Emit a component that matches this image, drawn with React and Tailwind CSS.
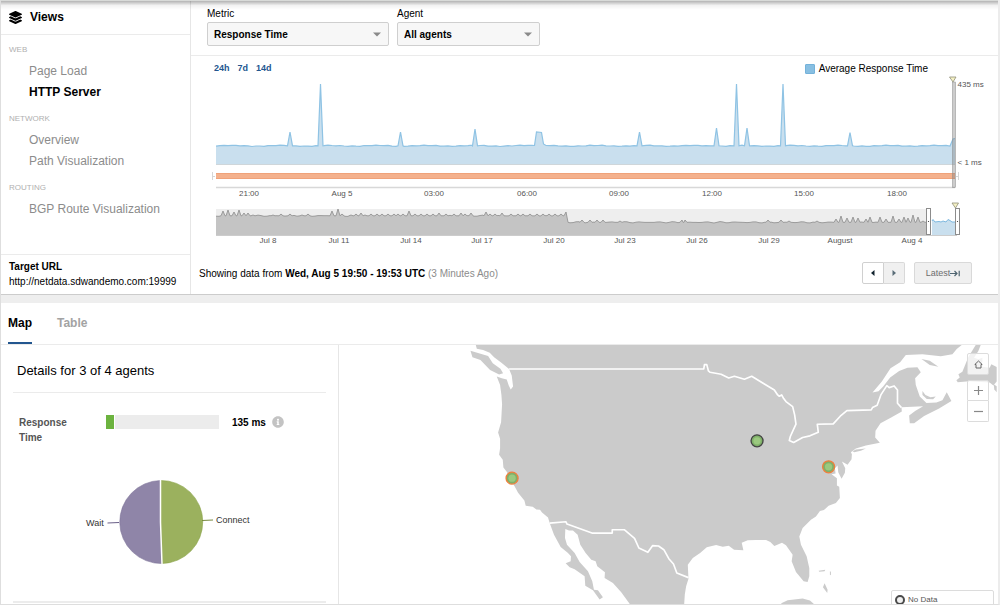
import React from 'react';
import { FaLayerGroup, FaInfoCircle } from 'react-icons/fa';

const NAV = [
  { title: 'WEB', items: ['Page Load', 'HTTP Server'] },
  { title: 'NETWORK', items: ['Overview', 'Path Visualization'] },
  { title: 'ROUTING', items: ['BGP Route Visualization'] },
];

const HOURS = [
  [249, '21:00'], [342, 'Aug 5'], [434, '03:00'], [527, '06:00'],
  [619, '09:00'], [712, '12:00'], [804, '15:00'], [897, '18:00'],
];

const DAYS = [
  [268, 'Jul 8'], [339, 'Jul 11'], [411, 'Jul 14'], [482, 'Jul 17'], [554, 'Jul 20'],
  [625, 'Jul 23'], [697, 'Jul 26'], [769, 'Jul 29'], [840, 'August'], [912, 'Aug 4'],
];

// [x, peak y] of each spike in the response time series
const SPIKES = [
  [290, 132], [320.5, 84], [400.5, 132], [475, 129], [639.5, 132],
  [716.5, 128], [736.5, 84], [747, 128], [783, 84], [850, 132.5],
];

// [x, peak y] of the bumps in the 30 day overview
const BUMPS = [
  [223, 211], [228, 210], [234, 212], [239, 210], [244, 213], [248, 213], [253, 215],
  [273, 215], [281, 214], [290, 214], [302, 215], [308, 214], [332, 211], [338, 209], [342, 214],
  [351, 215], [356, 214], [361, 213], [365, 215], [371, 214], [377, 214], [382, 214], [388, 214],
  [394, 214], [398, 214], [403, 214], [409, 211], [415, 214], [421, 214], [427, 214], [433, 214],
  [439, 213], [446, 214], [454, 214], [461, 213], [465, 214], [471, 213], [486, 212], [490, 214],
  [495, 214], [502, 213], [511, 214], [518, 214], [523, 214], [530, 214], [537, 214], [543, 214],
  [549, 214], [555, 214], [561, 214], [566, 212],
  [582, 220], [590, 220], [597, 220], [603, 220], [620, 221], [682, 220], [685, 220], [768, 220],
  [781, 220], [789, 221], [817, 221], [836, 219], [841, 216], [847, 218], [853, 217], [858, 218],
  [866, 219], [870, 217], [880, 217], [886, 219], [893, 216], [899, 219], [904, 217], [908, 218],
  [913, 215], [918, 217], [923, 221],
];

function wobble(x) {
  return Math.sin(x * 1.7) * 0.4 + Math.sin(x * 0.53) * 0.3;
}

function trace(from, to, step, base, peaks, spread) {
  const points = [];
  for (let x = from; x <= to; x += step) {
    if (!peaks.some(([px]) => Math.abs(px - x) < spread + 0.5)) points.push([x, base(x) + wobble(x)]);
  }
  peaks.forEach(([px, py]) => {
    points.push([px - spread, base(px - spread)], [px, py], [px + spread, base(px + spread)]);
  });
  return points.sort((a, b) => a[0] - b[0]).map((p) => `${p[0].toFixed(1)},${p[1].toFixed(1)}`).join(' ');
}

const leftLine = trace(216, 532, 4, () => 145.8, SPIKES.filter(([x]) => x < 534), 2.5);
const rightLine = trace(546, 950, 4, () => 145.8, SPIKES.filter(([x]) => x > 534), 2.5);
const responseLine = `${leftLine} 534.5,145.5 536.5,132 541.5,132.5 543.5,144 ${rightLine} 953,139 955,138.5`;
const overviewLine = trace(216, 926, 3, (x) => (x < 568 ? 215.8 : 222.3), BUMPS, 2);
const selectedLine = '932,221 933,219.5 935,222 939,221.5 941,222 943,221 946,222 948,219.5 950,220.5 952,222 956,222';

function Sidebar() {
  return (
    <aside className="flex w-[190px] shrink-0 flex-col border-r border-[#e6e6e6]">
      <div className="flex h-[35px] items-center gap-2 border-b border-[#ebebeb] pl-2">
        <FaLayerGroup size={13} />
        <h2 className="text-[12px] font-bold">Views</h2>
      </div>
      <nav className="flex-1">
        {NAV.map((group) => (
          <section key={group.title} className="pb-px">
            <h3 className="pt-2 pb-1 pl-2 text-[8px] leading-[14px] text-[#b0b0b0]">{group.title}</h3>
            {group.items.map((item) => (
              <a
                key={item}
                href="#"
                className={
                  item === 'HTTP Server'
                    ? 'block pl-7 text-[12px] leading-[21px] font-bold text-black'
                    : 'block pl-7 text-[12px] leading-[21px] text-[#8c8c8c]'
                }
              >
                {item}
              </a>
            ))}
          </section>
        ))}
      </nav>
      <div className="border-t border-[#ebebeb] pt-1 pb-[5px] pl-2 text-[10px] leading-[15px]">
        <h3 className="font-bold">Target URL</h3>
        <p>http://netdata.sdwandemo.com:19999</p>
      </div>
    </aside>
  );
}

function Picker({ id, label, value, width }) {
  return (
    <div className={width}>
      <label htmlFor={id} className="block text-[10px] leading-[16px]">{label}</label>
      <div className="relative">
        <select
          id={id}
          className="block h-6 w-full appearance-none rounded-[2px] border border-[#cfcfcf] bg-[#f7f7f7] pl-[6px] text-[10px] font-bold"
        >
          <option>{value}</option>
        </select>
        <svg className="pointer-events-none absolute top-[10px] right-2 h-[5px] w-2" viewBox="0 0 8 5">
          <path d="M0 0.5h8L4 4.5z" fill="#8a8a8a" />
        </svg>
      </div>
    </div>
  );
}

function TimelineChart() {
  return (
    <svg viewBox="207 76 787 172" className="block w-full" fontSize="8" fill="#555">
      <polygon points={`216,164 ${responseLine} 955,164`} fill="#c9dfee" />
      <polyline points={responseLine} fill="none" stroke="#8fc3e4" strokeWidth="1.2" />
      <path d="M216 164.5H955" stroke="#cfd6da" />

      <rect x="216" y="173" width="739" height="6" fill="#f4b18d" />
      <path d="M216 173.5H955M216 178.5H955" stroke="#efa27a" />
      <path d="M212.5 172v8M212 176.5h3M958.5 172v8M956 176.5h3" stroke="#d6d6d6" />
      <path d="M216 187.5H955" stroke="#d8d8d8" strokeWidth="1.5" />
      {HOURS.map(([x, text]) => (
        <text key={text} x={x} y="196" textAnchor="middle">{text}</text>
      ))}

      <rect x="952.5" y="82" width="3" height="105.5" fill="#808080" fillOpacity="0.4" stroke="#8c8c8c" strokeWidth="0.5" />
      <path d="M949.5 77h6.5l-3 5z" fill="#f5f1c4" stroke="#8f8f7a" strokeWidth="0.8" />
      <text x="957.5" y="87">435 ms</text>
      <text x="957.5" y="165">&lt; 1 ms</text>

      <rect x="216" y="209" width="712" height="26" fill="#eeeeee" />
      <polygon points={`216,235 ${overviewLine} 928,222 928,235`} fill="#c4c4c4" />
      <polyline points={`${overviewLine} 928,222`} fill="none" stroke="#949494" strokeWidth="0.9" />
      <polygon points={`932,235 ${selectedLine} 956,235`} fill="#c9dfee" />
      <polyline points={selectedLine} fill="none" stroke="#7db8df" strokeWidth="1" />
      <path d="M216 235.5H957" stroke="#cccccc" />
      <rect x="926.5" y="208.5" width="4" height="26" fill="#fff" stroke="#8c8c8c" />
      <rect x="955.5" y="208.5" width="4" height="26" fill="#fff" stroke="#8c8c8c" />
      <circle cx="928.5" cy="221.5" r="0.6" fill="#333" />
      <circle cx="957.5" cy="221.5" r="0.6" fill="#333" />
      <path d="M952 203h6.5l-3 5z" fill="#f5f1c4" stroke="#8f8f7a" strokeWidth="0.8" />
      {DAYS.map(([x, text]) => (
        <text key={text} x={x} y="243" textAnchor="middle">{text}</text>
      ))}
    </svg>
  );
}

function Timeline() {
  return (
    <div className="flex min-w-0 flex-1 flex-col">
      <div className="flex h-14 gap-2 border-b border-[#ebebeb] pt-[6px] pl-4">
        <Picker id="metric" label="Metric" value="Response Time" width="w-[182px]" />
        <Picker id="agent" label="Agent" value="All agents" width="w-[143px]" />
      </div>
      <div className="flex h-5 items-end justify-between pr-[70px] pl-[23px]">
        <div className="flex gap-2 text-[9px] leading-[15px] font-bold text-[#23568f]">
          <a href="#">24h</a>
          <a href="#">7d</a>
          <a href="#">14d</a>
        </div>
        <div className="flex items-center gap-1 text-[10px] leading-[15px]">
          <span className="h-[10px] w-[10px] rounded-[1px] border border-[#74b2da] bg-[#88bfe2]" />
          Average Response Time
        </div>
      </div>
      <div className="pr-1 pl-4">
        <TimelineChart />
      </div>
      <div className="flex flex-1 items-center justify-between pt-1 pr-[26px] pl-2">
        <p className="text-[10px]">
          Showing data from <b>Wed, Aug 5 19:50 - 19:53 UTC</b>{' '}
          <span className="text-[#8c8c8c]">(3 Minutes Ago)</span>
        </p>
        <div className="flex h-[22px] gap-[9px]">
          <div className="flex">
            <button aria-label="Previous" className="flex w-[22px] items-center justify-center rounded-l-[2px] border border-[#d0d0d0] bg-white">
              <svg className="h-[6px] w-1" viewBox="0 0 4 6"><path d="M3.5 0v6L0 3z" fill="#12232e" /></svg>
            </button>
            <button aria-label="Next" className="flex w-[21px] items-center justify-center rounded-r-[2px] border border-l-0 border-[#d9d9d9] bg-[#f0f0f0]">
              <svg className="h-[6px] w-1" viewBox="0 0 4 6"><path d="M0.5 0v6L4 3z" fill="#5a6d78" /></svg>
            </button>
          </div>
          <button className="flex w-[58px] items-center justify-center rounded-[2px] border border-[#d9d9d9] bg-[#f0f0f0] text-[9px] leading-[12px] text-[#6e6e6e]">
            <span>Latest</span>
            <svg className="h-[7px] w-[10px] shrink-0" viewBox="0 0 10 7" fill="none" stroke="#4f6470" strokeWidth="1.2">
              <path d="M0 3.5h7M4.5 1L7 3.5 4.5 6M9.2 0.8v5.4" />
            </svg>
          </button>
        </div>
      </div>
    </div>
  );
}

function Details() {
  return (
    <div className="flex w-[338px] shrink-0 flex-col border-r border-[#e6e6e6] pr-3 pl-3">
      <h2 className="h-12 border-b border-[#ebebeb] pt-4 pl-1 text-[13px] leading-[20px]">Details for 3 of 4 agents</h2>
      <div className="flex pt-[22px] pl-[6px] text-[10px] font-bold">
        <div className="w-[87px] pr-6 leading-[15px] text-[#555]">Response Time</div>
        <div className="h-[14px] w-[113px] bg-[#ececec]">
          <div className="h-full border-r border-white bg-[#6cb33f]" style={{ width: '8%' }} />
        </div>
        <div className="flex h-[14px] items-center gap-[6px] pl-[13px]">
          135 ms
          <FaInfoCircle size={12} color="#c3c3c3" />
        </div>
      </div>
      <svg viewBox="0 0 180 100" className="mt-7 ml-[67px] h-[100px] w-[180px] shrink-0" fontSize="9" fill="#333">
        <path d="M80.5 49V7.5A41.5 41.5 0 0 0 82 90.5z" fill="#8f85a8" stroke="#7e7399" strokeWidth="0.6" />
        <path d="M80.5 49V7.5A41.5 41.5 0 0 1 82 90.5z" fill="#9bb15e" stroke="#8aa348" strokeWidth="0.6" />
        <path d="M80.5 7V49L82 91" fill="none" stroke="#fff" strokeWidth="1.5" />
        <path d="M27.5 50L39 49.5" stroke="#6a5f88" />
        <path d="M122 47.5L133 47" stroke="#77893f" />
        <text x="6" y="53">Wait</text>
        <text x="136" y="50">Connect</text>
      </svg>
      <hr className="mt-auto mb-px border-t-2 border-[#ececec]" />
    </div>
  );
}

function Marker({ x, y, ring }) {
  return (
    <g>
      <circle cx={x} cy={y} r="18" fill="#7fb069" stroke={ring} strokeWidth="4" />
      <circle cx={x} cy={y} r="11" fill="#9bc97f" />
    </g>
  );
}

function AgentMap() {
  return (
    <div className="relative min-w-0 flex-1 overflow-hidden">
      <svg viewBox="-363 30 1980 780" preserveAspectRatio="xMidYMin slice" className="block h-full w-full">
        <g fill="#cbcbcb">
          {/* North American mainland */}
          <path
            d="M48 30L51 41L70 45L90 53L103 67L126 84L148 102L156 122L160 155L153 164L147 152L141 134L126 130L111 125L121 150L125 180L127 208
            L124 262L115 293L121 312L121 340L118 360L129 375L131 398L142 412L150 432L165 455L175 474L194 497L198 513L219 516L230 524L241 525L247 533
            L265 548L270 565L283 600L303 637L325 655L334 665L333 680L318 686L330 698L345 704L375 725L377 753L400 767L420 795L430 788L415 767L403 765
            L398 740L385 710L360 682L345 655L322 630L316 610L317 583L328 587L340 587L354 600L362 630L378 655L395 675L408 680L413 695L436 713L435 730
            L460 745L485 773L512 810L674 810L676 780L680 755L687 732L685 690L700 670L722 655L742 638L770 631L790 636L808 633L824 645L852 647L847 624
            L865 617L890 616L920 616L933 622L945 634L968 624L980 632L1000 660L997 680L1010 712L1033 740L1045 742L1050 725L1050 700L1042 665L1025 630
            L1020 605L1030 580L1055 555L1070 545L1082 529L1094 526L1108 513L1130 505L1142 490L1140 456L1133 452L1133 430L1117 418L1129 416L1127 400
            L1135 392L1137 412L1147 432L1157 414L1158 400L1148 380L1165 390L1177 373L1178 358L1175 352L1190 341L1220 332L1262 324L1248 308L1249 288
            L1264 265L1296 248L1328 230L1327 217L1392 214L1368 228L1350 242L1352 265L1365 265L1395 243L1440 221L1477 198L1463 172L1450 196L1432 203
            L1402 204L1382 185L1370 150L1368 130L1385 112L1375 97L1345 98L1320 108L1293 128L1272 155L1258 169L1240 173L1268 140L1294 100L1323 82
            L1340 60L1390 58L1445 64L1480 58L1493 42L1508 30Z"
          />
          <path d="M32 47L85 63L99 85L122 101L130 115L118 119L91 105L62 75L38 67Z" />
          <path d="M1387 72L1412 77L1438 95L1412 90Z" />
          <path d="M1390 168L1399 180L1414 187L1430 185L1422 193L1403 192L1390 180Z" />
          <path d="M1550 30L1565 30L1558 48L1545 68L1558 73L1570 68L1570 82L1560 94L1592 98L1597 88L1613 96V140L1603 152L1592 143L1530 139L1496 142L1492 136L1502 128L1498 118L1510 110L1528 66Z" />
          <path d="M1604 148L1613 154V172L1606 164Z" />
          <path d="M1180 349L1190 344L1220 341L1205 348L1185 352Z" />
          <path d="M1078 708L1098 705L1096 710L1080 711ZM1112 710L1115 711L1115 722L1112 720ZM1096 746L1105 765L1104 775L1091 758Z" />
          <path d="M966 806L985 797L1030 792L1052 798L1066 810H966Z" />
        </g>
        <g fill="none" stroke="#fff" strokeWidth="5" strokeLinejoin="round">
          <path
            d="M148 102H733L735 89H742L747 108L752 112L785 118L808 129L825 124L855 133L877 124L915 147L945 165L955 180L960 184L967 180L973 191L980 200
            L1000 215L1006 240L1010 268L1002 285L993 305L990 317L1003 323L1030 308L1052 303L1077 292L1074 268L1122 267L1143 244L1163 227L1236 225L1240 218
            L1254 211L1265 180L1283 152L1290 158L1305 153L1315 165L1315 205L1327 218"
          />
          <path d="M270 565L319 561L322 568L397 595H458V585H494L525 611L538 640L565 653L579 633L597 634L613 645L628 672L642 688L652 715L687 729" />
        </g>
        <Marker x={157} y={430} ring="#f07f3c" />
        <Marker x={893} y={318} ring="#444444" />
        <Marker x={1108} y={396} ring="#f07f3c" />
      </svg>
      <div className="absolute top-2 right-[9px] flex w-[22px] flex-col">
        <button aria-label="Reset view" className="mb-[5px] flex h-[22px] items-center justify-center rounded-[2px] border border-[#dcdcdc] bg-white/75">
          <svg className="h-[9px] w-[9px]" viewBox="0 0 9 9" fill="none" stroke="#666">
            <path d="M0.8 4.5L4.5 1l3.7 3.5H7V8H2V4.5z" />
          </svg>
        </button>
        <button aria-label="Zoom in" className="flex h-[21px] items-center justify-center rounded-t-[2px] border border-[#dcdcdc] bg-white/75">
          <svg className="h-[9px] w-[9px]" viewBox="0 0 9 9" stroke="#888" strokeWidth="1.2"><path d="M0 4.5h9M4.5 0v9" /></svg>
        </button>
        <button aria-label="Zoom out" className="flex h-[21px] items-center justify-center rounded-b-[2px] border border-t-0 border-[#dcdcdc] bg-white/75">
          <svg className="h-[9px] w-[9px]" viewBox="0 0 9 9" stroke="#888" strokeWidth="1.2"><path d="M0 4.5h9" /></svg>
        </button>
      </div>
      <div className="absolute right-1 bottom-[-6px] flex h-5 w-[103px] items-center gap-[3px] rounded-[2px] border border-[#dcdcdc] bg-white pl-[3px] text-[8px] text-[#555]">
        <span className="h-[10px] w-[10px] rounded-full border-2 border-[#4a4a4a] bg-[#f0f0f0]" />
        No Data
      </div>
    </div>
  );
}

function App() {
  return (
    <div className="relative flex h-screen flex-col overflow-hidden border-r-2 border-b border-l border-[#dedede] border-r-[#ececec] bg-white font-['Liberation_Sans',Arial,sans-serif] text-black">
      <div className="pointer-events-none absolute inset-x-0 top-0 h-[10px] border-t border-[#d8dad8] bg-linear-to-b from-black/30 via-black/5 to-transparent" />
      <div className="flex h-[295px] shrink-0 border-b border-[#cccccc]">
        <Sidebar />
        <Timeline />
      </div>
      <div className="h-2 shrink-0 bg-[#eeeeee]" />
      <div className="flex h-[42px] shrink-0 gap-[25px] border-b border-[#ebebeb] pl-[7px] text-[12px] font-bold">
        <button className="border-b-2 border-[#23568f]">Map</button>
        <button className="border-b-2 border-transparent text-[#a3a3a3]">Table</button>
      </div>
      <div className="flex min-h-0 flex-1">
        <Details />
        <AgentMap />
      </div>
    </div>
  );
}

export default App;
